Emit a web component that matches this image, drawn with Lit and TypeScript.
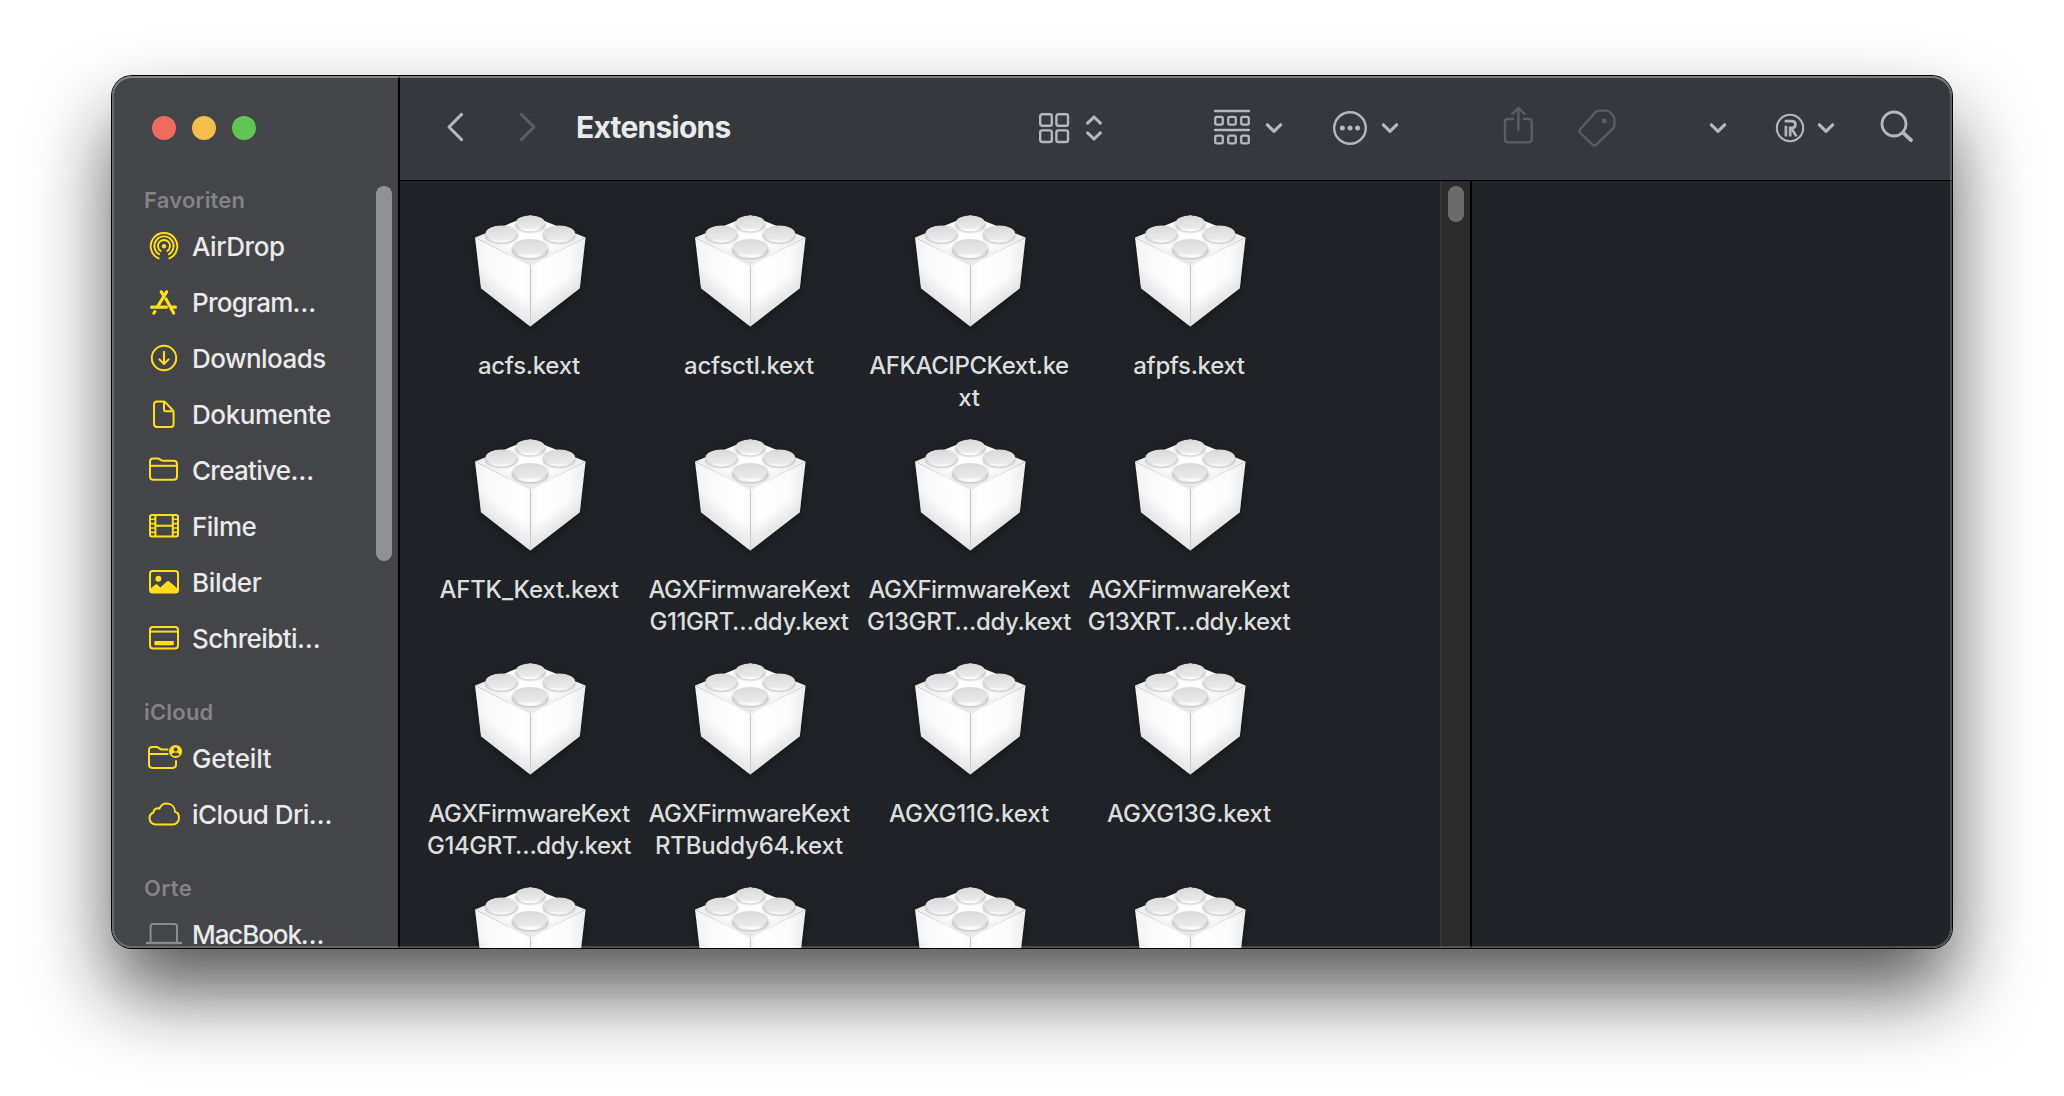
import { LitElement, html, svg, css } from "lit";
import { customElement } from "lit/decorators.js";

type Entry = { icon: string; label: string; ls: number };
type Section = { title: string; ls: number; items: Entry[] };

const sections: Section[] = [
  {
    title: "Favoriten", ls: 0.2,
    items: [
      { icon: "airdrop", label: "AirDrop", ls: -0.45 },
      { icon: "apps", label: "Program…", ls: -0.75 },
      { icon: "download", label: "Downloads", ls: -0.55 },
      { icon: "doc", label: "Dokumente", ls: -0.4 },
      { icon: "folder", label: "Creative…", ls: -0.7 },
      { icon: "film", label: "Filme", ls: -0.5 },
      { icon: "photo", label: "Bilder", ls: -0.35 },
      { icon: "desktop", label: "Schreibti…", ls: -0.6 },
    ],
  },
  {
    title: "iCloud", ls: 0.2,
    items: [
      { icon: "shared", label: "Geteilt", ls: -0.2 },
      { icon: "cloud", label: "iCloud Dri…", ls: -0.55 },
    ],
  },
  { title: "Orte", ls: 0.35, items: [{ icon: "laptop", label: "MacBook…", ls: -1.1 }] },
];

type Line = [text: string, spacing: number];
const firmware: Line = ["AGXFirmwareKext", -0.55];
const files: Line[][] = [
  [["acfs.kext", -0.3]], [["acfsctl.kext", -0.25]], [["AFKACIPCKext.ke", -0.45], ["xt", -0.2]], [["afpfs.kext", -0.35]],
  [["AFTK_Kext.kext", -0.2]], [firmware, ["G11GRT…ddy.kext", -0.4]], [firmware, ["G13GRT…ddy.kext", -0.4]], [firmware, ["G13XRT…ddy.kext", -0.4]],
  [firmware, ["G14GRT…ddy.kext", -0.45]], [firmware, ["RTBuddy64.kext", -0.2]], [["AGXG11G.kext", -0.1]], [["AGXG13G.kext", -0.2]],
  [], [], [], [],
];

/* Sidebar glyphs share a 40x32 box. */
const glyphs: Record<string, unknown> = {
  airdrop: svg`<g fill="none" stroke="currentColor" stroke-width="1.9" stroke-linecap="round">
    <path d="M14.6 28.4A13.3 13.3 0 1 1 25.4 28.4"/><path d="M15.2 24.3A9.6 9.6 0 1 1 24.8 24.3"/>
    <path d="M16.6 20.9A6 6 0 1 1 23.4 20.9"/></g><circle cx="20" cy="16.2" r="2.2" fill="currentColor"/>`,
  apps: svg`<g fill="none" stroke="currentColor" stroke-width="3.2" stroke-linecap="round">
    <path d="M22.6 5.8L13.4 21"/><path d="M17.2 5.8L19.4 9.2M22 13L29.6 27"/><path d="M7.6 21.2H22.4M27.6 21.2H31.4"/><path d="M10.9 25.6L9.8 27.2"/></g>`,
  download: svg`<g fill="none" stroke="currentColor" stroke-width="2" stroke-linecap="round" stroke-linejoin="round">
    <circle cx="20" cy="16" r="12.2"/><path d="M20 9.8V21.8M15.4 17.4L20 22L24.6 17.4"/></g>`,
  doc: svg`<g fill="none" stroke="currentColor" stroke-width="2" stroke-linejoin="round">
    <path d="M13 3.6H19.4Q20.6 3.6 21.4 4.4L28.8 12.2Q29.6 13 29.6 14.2V26Q29.6 28.9 26.6 28.9H13Q10 28.9 10 26V6.6Q10 3.6 13 3.6Z"/>
    <path d="M20 4V11.6Q20 13.2 21.6 13.2H29.2"/></g>`,
  folder: svg`<g fill="none" stroke="currentColor" stroke-width="2" stroke-linejoin="round">
    <path d="M9.2 4.6H13.6Q15 4.6 16 5.4L16.8 6Q17.7 6.8 19.2 6.8H29.6Q33 6.8 33 10.2V22.4Q33 25.8 29.6 25.8H9.4Q6 25.8 6 22.4V7.8Q6 4.6 9.2 4.6Z"/><path d="M6 11.8H33"/></g>`,
  film: svg`<g fill="none" stroke="currentColor" stroke-width="2"><rect x="6" y="5" width="28" height="21.6" rx="2"/>
    <path d="M11.4 5V26.6M28.8 5V26.6M11.4 15.8H28.8"/><path stroke-width="1.6" d="M6 9.2H11.4M6 13.6H11.4M6 18H11.4M6 22.4H11.4M28.8 9.2H34M28.8 13.6H34M28.8 18H34M28.8 22.4H34"/></g>`,
  photo: svg`<rect x="6" y="5" width="28" height="21.6" rx="2.6" fill="none" stroke="currentColor" stroke-width="2"/>
    <circle cx="14.4" cy="12.8" r="3" fill="currentColor"/><path fill="currentColor" d="M6 23L11.4 18.6Q12.3 18 13.2 18.6L16.4 21.4L22.8 15.6Q24.1 14.6 25.4 15.6L34 23V26H6Z"/>`,
  desktop: svg`<g fill="none" stroke="currentColor" stroke-width="2"><rect x="6" y="5" width="28" height="21.6" rx="3"/><path d="M6 9.6H34"/></g>
    <rect x="10.4" y="19" width="19.4" height="4.2" rx="0.6" fill="currentColor"/>`,
  shared: svg`<g fill="none" stroke="currentColor" stroke-width="2" stroke-linecap="round"><path d="M23.6 7.4H18.2Q16.6 7.4 15.6 6.6L14.8 6Q13.8 5 12.4 5H8.2Q5 5 5 8.2V22.6Q5 25.9 8.2 25.9H28.8Q32 25.9 32 22.8V19"/><path d="M5 12H23.6"/></g>
    <circle cx="31.6" cy="9.4" r="6.5" fill="currentColor"/><circle cx="31.6" cy="7.4" r="2" fill="#444549"/><path fill="#444549" d="M27.6 12.9Q28.4 10.6 31.6 10.6T35.6 12.9Q31.6 15 27.6 12.9Z"/>`,
  cloud: svg`<path fill="none" stroke="currentColor" stroke-width="2" stroke-linejoin="round" d="M11.2 26.4A6.2 6.2 0 0 1 9.4 14.5Q9.6 11 12.8 10.4Q14.4 10.1 15.4 10.6Q17.6 5.6 22.8 5.6C27.6 5.6 30.8 9 31 13.8C33.4 14.4 35 16.8 35 19.8C35 23.4 32.4 26.4 28.8 26.4Z"/>`,
  laptop: svg`<g fill="none" stroke="currentColor" stroke-width="2" stroke-linecap="round"><path d="M6.6 24.6V8.6Q6.6 6 9.2 6H30.4Q33 6 33 8.6V24.6"/><path stroke-width="2.6" d="M3 25H37"/></g>`,
};

const chevron = html`<svg class="chev" width="18" height="12" viewBox="0 0 18 12"><path d="M2.4 2.8L9 9.4L15.6 2.8" fill="none" stroke="currentColor" stroke-width="3.2" stroke-linecap="round" stroke-linejoin="round"/></svg>`;

@customElement("kext-brick")
class KextBrick extends LitElement {
  static styles = css`
    :host { display: block; width: 128px; height: 128px; }
    .brick { display: block; overflow: visible; filter: drop-shadow(0 2px 4px rgba(0, 0, 0, 0.35)); }
  `;

  private stud(cx: number, cy: number, rx: number, ry: number, h: number) {
    return svg`
      <ellipse cx=${cx} cy=${cy + h + 0.6} rx=${rx + 0.5} ry=${ry + 0.5} fill="#a8a8a8" opacity="0.75" filter="url(#soft)"/>
      <path d="M${cx - rx} ${cy}V${cy + h}A${rx} ${ry} 0 0 0 ${cx + rx} ${cy + h}V${cy}Z" fill="url(#wall)"/>
      <ellipse cx=${cx} cy=${cy} rx=${rx} ry=${ry} fill="url(#cap)"/>`;
  }

  render() {
    return html`<svg class="brick" width="128" height="128" viewBox="0 0 128 128">
      <defs>
        <linearGradient id="left" x1="0" y1="0" x2="1" y2="0"><stop offset="0" stop-color="#f3f3f3"/><stop offset="0.3" stop-color="#fafafa"/><stop offset="0.85" stop-color="#ffffff"/><stop offset="1" stop-color="#f8f8f8"/></linearGradient>
        <linearGradient id="right" x1="0" y1="0" x2="1" y2="0"><stop offset="0" stop-color="#f5f5f5"/><stop offset="0.15" stop-color="#ffffff"/><stop offset="0.7" stop-color="#fbfbfb"/><stop offset="1" stop-color="#ececec"/></linearGradient>
        <linearGradient id="footL" gradientUnits="userSpaceOnUse" x1="39" y1="101" x2="51" y2="85"><stop offset="0" stop-color="#d4d4d4" stop-opacity="0.6"/><stop offset="1" stop-color="#d4d4d4" stop-opacity="0"/></linearGradient>
        <linearGradient id="footR" gradientUnits="userSpaceOnUse" x1="89" y1="101" x2="78" y2="85"><stop offset="0" stop-color="#d4d4d4" stop-opacity="0.6"/><stop offset="1" stop-color="#d4d4d4" stop-opacity="0"/></linearGradient>
        <radialGradient id="top" cx="0.5" cy="0.4" r="0.6"><stop offset="0" stop-color="#ffffff"/><stop offset="0.5" stop-color="#fafafa"/><stop offset="1" stop-color="#e4e4e4"/></radialGradient>
        <linearGradient id="cap" x1="0" y1="0" x2="0.15" y2="1"><stop offset="0" stop-color="#d8d8d8"/><stop offset="1" stop-color="#ebebeb"/></linearGradient>
        <linearGradient id="wall" x1="0" y1="0" x2="1" y2="0"><stop offset="0" stop-color="#c8c8c8"/><stop offset="0.25" stop-color="#f6f6f6"/><stop offset="0.5" stop-color="#ffffff"/><stop offset="0.75" stop-color="#f6f6f6"/><stop offset="1" stop-color="#c8c8c8"/></linearGradient>
        <filter id="soft"><feGaussianBlur stdDeviation="0.8"/></filter>
      </defs>
      <path d="M9 30.4L64.3 8.2L119.6 30.4L64.3 59Z" fill="url(#top)"/>
      <path d="M9 30.4L64.3 58.6V119.6L15 81.3Z" fill="url(#left)"/>
      <path d="M119.6 30.4L64.3 58.6V119.6L113.8 81.3Z" fill="url(#right)"/>
      <path d="M9 30.4L64.3 58.6V119.6L15 81.3Z" fill="url(#footL)"/>
      <path d="M119.6 30.4L64.3 58.6V119.6L113.8 81.3Z" fill="url(#footR)"/>
      ${this.stud(64.3, 15.4, 14.4, 6.8, 2.2)}
      ${this.stud(35.5, 26.1, 15.8, 7.6, 1.8)}
      ${this.stud(93.1, 26.1, 15.8, 7.6, 1.8)}
      ${this.stud(64.3, 39.8, 17.7, 7.9, 3.4)}
    </svg>`;
  }
}

@customElement("finder-sidebar")
class FinderSidebar extends LitElement {
  static styles = css`
    :host { display: flex; flex-direction: column; width: 286px; height: 100%; background: #444549; border-right: 2px solid #000; box-sizing: content-box; flex: none; overflow: hidden; }
    .lights { display: flex; gap: 16px; padding: 40px 0 0 40px; height: 24px; flex: none; }
    .light { width: 24px; height: 24px; border-radius: 50%; }
    .red { background: #ed6a5e; }
    .amber { background: #f4bf4f; }
    .green { background: #61c554; }
    .body { display: flex; justify-content: space-between; margin-top: 46px; flex: 1; min-height: 0; overflow: hidden; }
    .list { flex: 1; min-width: 0; padding-left: 32px; }
    .section { margin-bottom: 32px; }
    .title { height: 32px; padding-top: 2px; line-height: 24px; font-size: 22px; font-weight: 600; color: #828387; white-space: nowrap; box-sizing: border-box; }
    .row { display: flex; align-items: center; height: 56px; gap: 8px; font-size: 26px; font-weight: 500; color: #eaeaeb; white-space: nowrap; }
    .ic { width: 40px; height: 32px; flex: none; color: #ffdf1b; }
    .ic.grey { color: #8b8c8f; }
    .thumb { width: 16px; height: 375px; border-radius: 8px; background: #919195; margin-right: 6px; flex: none; }
  `;

  render() {
    return html`
      <div class="lights"><span class="light red"></span><span class="light amber"></span><span class="light green"></span></div>
      <div class="body">
        <div class="list">
          ${sections.map((s) => html`<div class="section">
            <div class="title" style="letter-spacing:${s.ls}px">${s.title}</div>
            ${s.items.map((i) => html`<div class="row">
              <svg class="ic ${i.icon === "laptop" ? "grey" : ""}" viewBox="0 0 40 32">${glyphs[i.icon]}</svg>
              <span style="letter-spacing:${i.ls}px">${i.label}</span>
            </div>`)}
          </div>`)}
        </div>
        <div class="thumb"></div>
      </div>`;
  }
}

@customElement("finder-toolbar")
class FinderToolbar extends LitElement {
  static styles = css`
    :host { display: flex; align-items: center; height: 104px; background: #35383c; border-bottom: 1px solid #000; color: #b4b7bb; flex: none; }
    svg { display: block; flex: none; }
    .nav { display: flex; align-items: center; gap: 55px; padding: 0 0 2px 46px; }
    .dim { color: #5a5d61; }
    .name { margin: 0 0 2px 39px; width: 402px; font-size: 30px; font-weight: 700; color: #e9eaeb; letter-spacing: -0.75px; }
    .group { display: flex; align-items: center; }
    .view { margin-left: 60px; gap: 15px; }
    .arrange { margin-left: 110px; gap: 14px; }
    .rows { margin-bottom: 3px; }
    .more { margin-left: 49px; gap: 13px; }
    .dots { margin-bottom: 1px; }
    .share { margin: 0 0 6px 103px; }
    .tag { margin-left: 43px; }
    .extra { margin-left: 92px; }
    .reg { margin-left: 48px; gap: 12px; }
    .find { margin: 0 0 2px 44px; }
  `;

  render() {
    return html`
      <div class="nav">
        <svg width="18" height="30" viewBox="0 0 18 30"><path d="M15.6 2.4L3 15L15.6 27.6" fill="none" stroke="currentColor" stroke-width="3" stroke-linecap="round" stroke-linejoin="round"/></svg>
        <svg class="dim" width="18" height="30" viewBox="0 0 18 30"><path d="M2.4 2.4L15 15L2.4 27.6" fill="none" stroke="currentColor" stroke-width="3" stroke-linecap="round" stroke-linejoin="round"/></svg>
      </div>
      <div class="name">Extensions</div>
      <div class="group view">
        <svg width="32" height="32" viewBox="0 0 32 32"><g fill="none" stroke="currentColor" stroke-width="2.4"><rect x="2.2" y="2.2" width="11.6" height="11.6" rx="2"/><rect x="18.4" y="2.2" width="11.6" height="11.6" rx="2"/><rect x="2.2" y="18.4" width="11.6" height="11.6" rx="2"/><rect x="18.4" y="18.4" width="11.6" height="11.6" rx="2"/></g></svg>
        <svg width="18" height="28" viewBox="0 0 18 28"><path d="M2.6 9.2L9 3L15.4 9.2M2.6 18.8L9 25L15.4 18.8" fill="none" stroke="currentColor" stroke-width="3.1" stroke-linecap="round" stroke-linejoin="round"/></svg>
      </div>
      <div class="group arrange">
        <svg class="rows" width="38" height="38" viewBox="0 0 38 38"><g fill="none" stroke="currentColor" stroke-width="2.3"><path stroke-linecap="round" d="M2 3H36M2 22H36"/><rect x="2.2" y="8.8" width="7.6" height="7.8" rx="1.6"/><rect x="15.2" y="8.8" width="7.6" height="7.8" rx="1.6"/><rect x="28.2" y="8.8" width="7.6" height="7.8" rx="1.6"/><rect x="2.2" y="27.6" width="7.6" height="7.8" rx="1.6"/><rect x="15.2" y="27.6" width="7.6" height="7.8" rx="1.6"/><rect x="28.2" y="27.6" width="7.6" height="7.8" rx="1.6"/></g></svg>
        ${chevron}
      </div>
      <div class="group more">
        <svg class="dots" width="36" height="36" viewBox="0 0 36 36"><circle cx="18" cy="18" r="15.8" fill="none" stroke="currentColor" stroke-width="2.4"/><g fill="currentColor"><circle cx="10.4" cy="18" r="2.5"/><circle cx="18" cy="18" r="2.5"/><circle cx="25.6" cy="18" r="2.5"/></g></svg>
        ${chevron}
      </div>
      <svg class="dim share" width="32" height="40" viewBox="0 0 32 40"><g fill="none" stroke="currentColor" stroke-width="2.4" stroke-linecap="round" stroke-linejoin="round"><path d="M10.8 14H6.2Q3 14 3 17.2V34.2Q3 37.4 6.2 37.4H26.6Q29.8 37.4 29.8 34.2V17.2Q29.8 14 26.6 14H22"/><path d="M16.4 25V3M10.2 9L16.4 2.8L22.6 9"/></g></svg>
      <svg class="dim tag" width="40" height="40" viewBox="0 0 40 40"><path d="M21.6 2.6H29.4Q31.4 2.6 32.8 4L36 7.4Q37.4 8.8 37.4 10.8V17Q37.4 19 36 20.4L19.4 36.6Q17.4 38.4 15.4 36.6L3.4 25Q1.6 23 3.4 21L18.6 4Q19.8 2.6 21.6 2.6Z" fill="none" stroke="currentColor" stroke-width="2.4" stroke-linejoin="round"/><circle cx="27.4" cy="13" r="2.6" fill="currentColor"/></svg>
      <div class="group extra">${chevron}</div>
      <div class="group reg">
        <svg width="30" height="30" viewBox="0 0 30 30"><circle cx="15" cy="15" r="13.2" fill="none" stroke="currentColor" stroke-width="2.1"/><g fill="none" stroke="currentColor" stroke-width="2.7"><path d="M10.9 12.8V23.6"/><path d="M9.6 8.1H17Q20.4 8.1 20.4 11.4T17 14.8H15.2V23.6"/><path d="M16.4 15.4L21.4 23.4"/></g></svg>
        ${chevron}
      </div>
      <svg class="find" width="36" height="36" viewBox="0 0 36 36"><g fill="none" stroke="currentColor" stroke-linecap="round"><circle cx="15" cy="15" r="12" stroke-width="2.8"/><path stroke-width="3.8" d="M24 23.6L32 31.2"/></g></svg>`;
  }
}

@customElement("app-root")
class AppRoot extends LitElement {
  static styles = css`
    :host { display: block; width: 2064px; height: 1096px; box-sizing: border-box; padding: 76px 112px; background: #fff; overflow: hidden; font-family: Inter, "Liberation Sans", sans-serif; }
    .window { display: grid; grid-template: 872px / 1840px; width: 1840px; height: 872px; border-radius: 20px; box-shadow: 0 0 0 1px #000, 0 44px 80px rgba(0, 0, 0, 0.66); }
    .frame, .rim { grid-area: 1 / 1; border-radius: 20px; }
    .frame { display: flex; overflow: hidden; background: #1f2226; }
    .rim { z-index: 1; pointer-events: none; box-shadow: inset 0 0 0 2px rgba(255, 255, 255, 0.2), inset 0 2px 0 rgba(255, 255, 255, 0.2); }
    .main { display: flex; flex-direction: column; flex: 1; min-width: 0; }
    .panes { display: flex; flex: 1; min-height: 0; overflow: hidden; }
    .files { display: grid; grid-template-columns: repeat(4, 220px); grid-auto-rows: 224px; width: 1021px; padding: 26px 0 0 19px; flex: none; align-content: start; }
    .file { display: flex; flex-direction: column; align-items: center; font-size: 24px; line-height: 32px; font-weight: 500; color: #dcdddd; }
    .pic { margin-left: 2px; }
    .label { display: flex; flex-direction: column; align-items: center; margin-top: 15px; white-space: nowrap; }
    .track { width: 29px; background: #2b2b2b; border-left: 1px solid #38383a; border-right: 2px solid #000; box-sizing: content-box; flex: none; }
    .thumb { width: 16px; height: 36px; border-radius: 8px; background: #6b6b6b; margin: 5px 0 0 7px; }
  `;

  render() {
    return html`<div class="window">
      <div class="frame">
        <finder-sidebar></finder-sidebar>
        <div class="main">
          <finder-toolbar></finder-toolbar>
          <div class="panes">
            <div class="files">
              ${files.map((lines) => html`<div class="file"><kext-brick class="pic"></kext-brick><div class="label">${lines.map(([text, ls]) => html`<span style="letter-spacing:${ls}px">${text}</span>`)}</div></div>`)}
            </div>
            <div class="track"><div class="thumb"></div></div>
          </div>
        </div>
      </div>
      <div class="rim"></div>
    </div>`;
  }
}
